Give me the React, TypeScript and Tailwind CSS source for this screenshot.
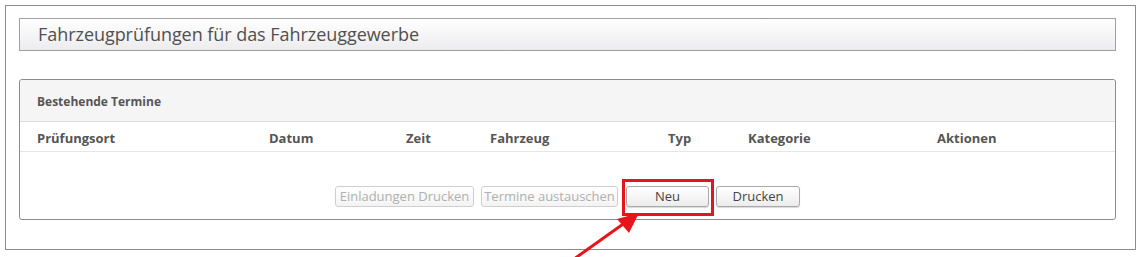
import React from 'react';

const columns = [
  { label: 'Prüfungsort', w: 'w-[232px]' },
  { label: 'Datum', w: 'w-[137px]' },
  { label: 'Zeit', w: 'w-[84px]' },
  { label: 'Fahrzeug', w: 'w-[178px]' },
  { label: 'Typ', w: 'w-[80px]' },
  { label: 'Kategorie', w: 'w-[189px]' },
  { label: 'Aktionen', w: 'flex-1' },
];

const Btn: React.FC<{ label: string; disabled?: boolean; className?: string }> = ({ label, disabled, className }) => (
  <button
    disabled={disabled}
    className={`h-[21px] rounded-[3px] border text-[13px] leading-none flex items-center justify-center ${
      disabled
        ? 'border-[#cfcfcf] text-[#b0b0b0] bg-gradient-to-b from-white to-[#f3f3f3]'
        : 'border-[#a9a9a9] text-[#444] bg-gradient-to-b from-white to-[#ececec] shadow-[0_1px_1px_rgba(0,0,0,0.15)]'
    } ${className ?? ''}`}
  >
    {label}
  </button>
);

export default function App() {
  return (
    <div className="relative w-[1143px] h-[257px] bg-white overflow-hidden" style={{ fontFamily: '"Open Sans", "Noto Sans", sans-serif' }}>
      <div className="ml-[5px] mt-[5px] w-[1131px] h-[245px] border border-[#8c8c8c] px-[13px] pt-[12px]">
        {/* Page title */}
        <div className="w-[1097px] h-[33px] border border-[#a0a0a0] bg-gradient-to-b from-white to-[#ececee] flex items-center pl-[18px]">
          <span className="text-[18px] text-[#505050] tracking-[-0.05px]">Fahrzeugprüfungen für das Fahrzeuggewerbe</span>
        </div>

        {/* Termine panel */}
        <div className="mt-[28px] w-[1097px] h-[141px] border border-[#8c8c8c] rounded-[3px] flex flex-col">
          <div className="h-[42px] bg-[#f5f5f5] border-b border-[#dcdcdc] flex items-center pl-[17px] pt-[2px] rounded-t-[3px]">
            <span className="text-[12px] font-bold text-[#555]">Bestehende Termine</span>
          </div>
          <div className="h-[30px] border-b border-[#e6e6e6] flex items-center pl-[17px] pt-[4px]">
            {columns.map((c) => (
              <div key={c.label} className={`${c.w} text-[13px] font-bold text-[#555]`}>
                {c.label}
              </div>
            ))}
          </div>
          <div className="flex-1 flex justify-center items-start pt-[34px] gap-[7px]">
            <Btn label="Einladungen Drucken" disabled className="w-[139px]" />
            <Btn label="Termine austauschen" disabled className="w-[137px] mr-[1px]" />
            <div className="relative">
              <Btn label="Neu" className="w-[83px]" />
              <div className="absolute -left-[4px] -top-[7px] w-[92px] h-[37px] border-[3px] border-[#e8141b]" />
            </div>
            <Btn label="Drucken" className="w-[84px]" />
          </div>
        </div>
      </div>

      {/* Red arrow */}
      <svg className="absolute left-0 top-0" width="1143" height="257" viewBox="0 0 1143 257">
        <line x1="574" y1="259" x2="626" y2="222" stroke="#e8141b" strokeWidth="3" />
        <polygon points="639,213 617,219 629,233" fill="#e8141b" />
      </svg>
    </div>
  );
}
